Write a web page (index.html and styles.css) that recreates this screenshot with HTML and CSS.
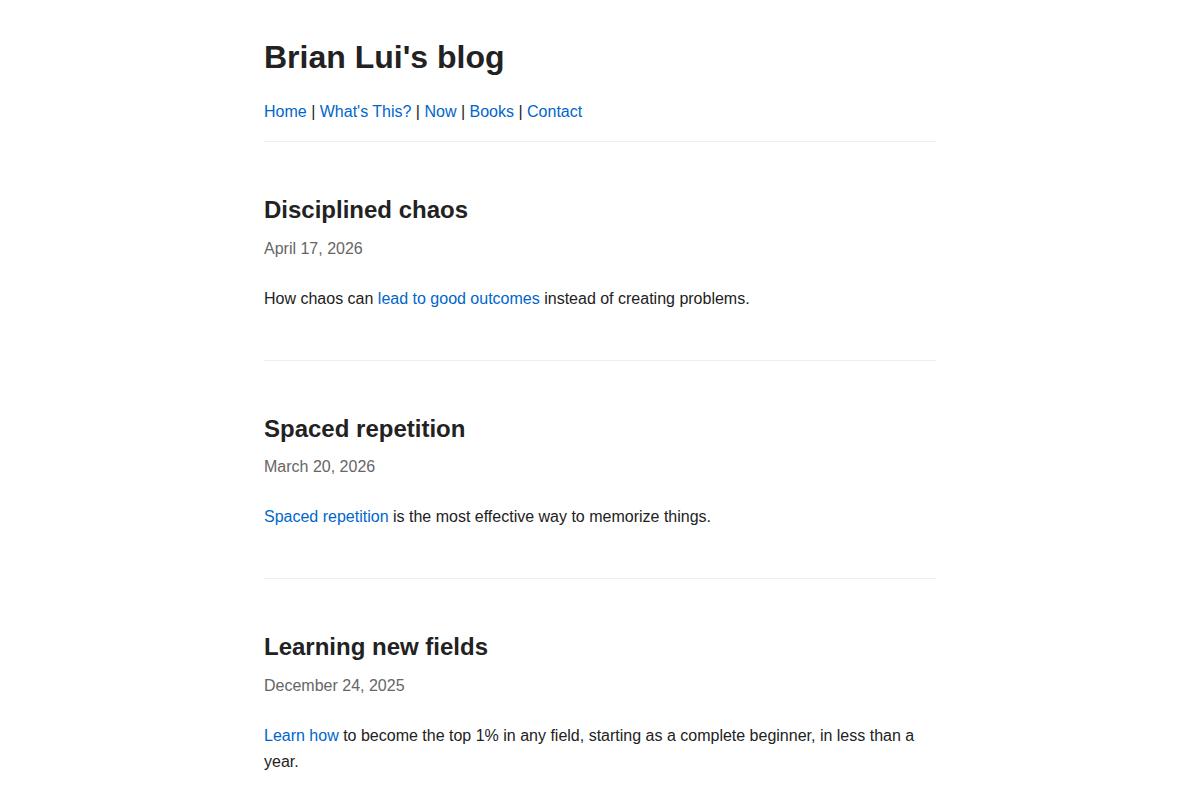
FILE: index.html
```html
<!DOCTYPE html>
<html lang="en">
<head>
  <meta charset="UTF-8" />
  <meta name="viewport" content="width=device-width, initial-scale=1.0"/>
  <title>Brian Lui's blog</title>
  <link rel="stylesheet" href="styles.css">
</head>
<body>

  <div class="page">

    <!-- Site header -->
    <header class="site-header">
      <h1>Brian Lui's blog</h1>
      <nav class="nav">
        <a href="#">Home</a> | <a href="#">What's This?</a> | <a href="#">Now</a> | <a href="#">Books</a> | <a href="#">Contact</a>
      </nav>
    </header>

    <!-- Post list -->
    <article class="post">
      <h2>Disciplined chaos</h2>
      <div class="date">April 17, 2026</div>
      <p>How chaos can <a href="#">lead to good outcomes</a> instead of creating problems.</p>
    </article>

    <article class="post">
      <h2>Spaced repetition</h2>
      <div class="date">March 20, 2026</div>
      <p><a href="#">Spaced repetition</a> is the most effective way to memorize things.</p>
    </article>

    <article class="post">
      <h2>Learning new fields</h2>
      <div class="date">December 24, 2025</div>
      <p><a href="#">Learn how</a> to become the top 1% in any field, starting as a complete beginner, in less than a year.</p>
    </article>

  </div>

</body>
</html>
```

FILE: styles.css
```css
body {
  margin: 0;
  font-family: "Liberation Sans", Arial, sans-serif;
  font-size: 16px;
  line-height: 26px;
  color: #222;
  background: #fff;
}

a {
  color: #0066cc;
  text-decoration: none;
}

.page {
  max-width: 672px;
  margin: 0 auto;
  padding-top: 38px;
}

.site-header {
  padding-bottom: 16px;
  border-bottom: 1px solid #eee;
}

h1 {
  font-size: 32px;
  line-height: 38px;
  margin: 0 0 23px;
}

.post {
  padding: 53px 0 48px;
  border-bottom: 1px solid #eee;
}

h2 {
  font-size: 24px;
  line-height: 29px;
  margin: 0 0 11.5px;
}

.date {
  color: #666;
  margin-bottom: 24px;
}

.post p {
  margin: 0;
}
```
